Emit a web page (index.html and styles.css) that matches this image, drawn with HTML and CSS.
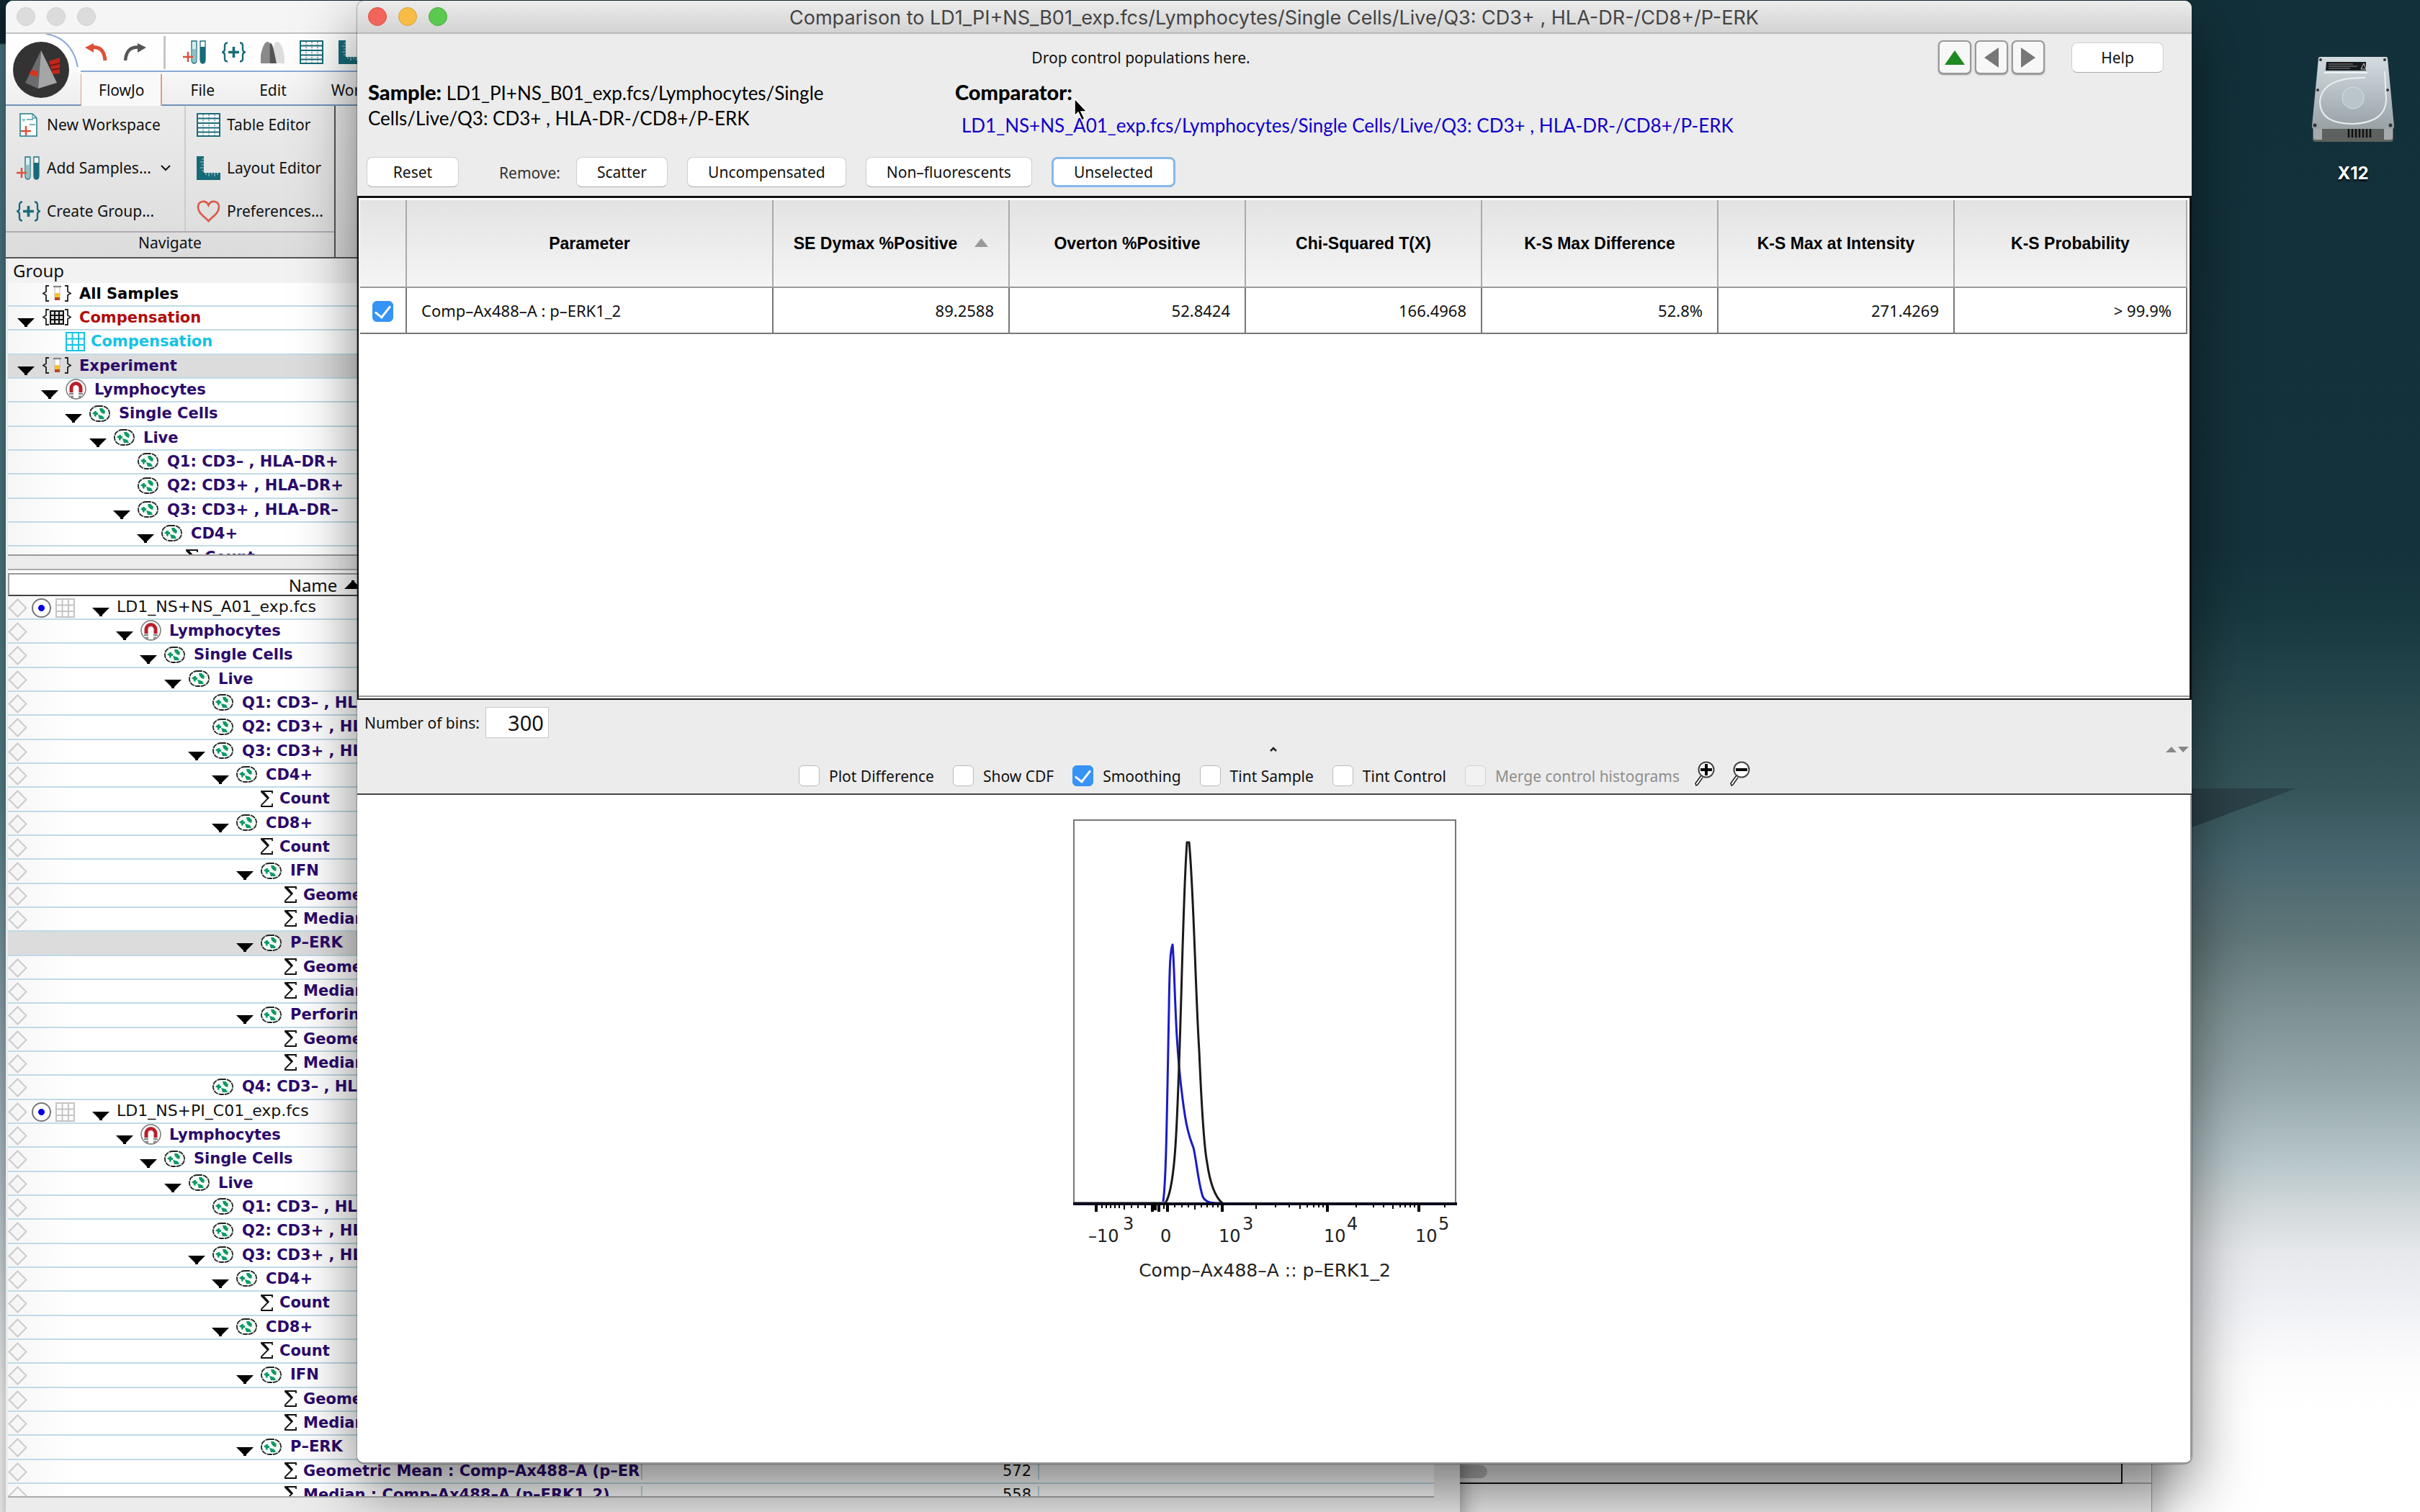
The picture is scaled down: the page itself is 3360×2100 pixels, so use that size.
FILE: index.html
```html
<!DOCTYPE html>
<html lang="en">
<head>
<meta charset="utf-8">
<title>Comparison</title>
<link rel="stylesheet" href="styles.css">
</head>
<body>
<svg class="defs" aria-hidden="true">
  <symbol id="tri" viewBox="0 0 24 12"><path d="M0 0h24L14 10v2h-4v-2z"/></symbol>
  <symbol id="cell" viewBox="0 0 29 23"><rect x="1" y="1" width="27" height="21" rx="11" ry="10" fill="#f4fbf8" stroke="#222" stroke-width="1.8" stroke-dasharray="7 1"/><path d="M4 11l4-3h2v2l2 0v3h-2l-1 3-2-1v-2zM14 4l4 0 4 4-1 4-3-1-3-3zM12 13l4 1 3 1 2 4-7 0z" fill="#0e9a63"/></symbol>
  <symbol id="magnet" viewBox="0 0 29 29"><circle cx="14.500" cy="14.500" r="13.500" fill="#fff" stroke="#777" stroke-width="1.500"/><path d="M8 19v-6a6.500 6.500 0 0 1 13 0v6" fill="none" stroke="#b8202c" stroke-width="5"/><path d="M5 21h6M18 21h6M7 25h4M18 25h4" stroke="#888" stroke-width="2.500"/></symbol>
  <symbol id="sigma" viewBox="0 0 17 23"><path d="M16 4V1H1v1l9 9-9 9v2h15v-4" fill="none" stroke="#111" stroke-width="1.800"/><path d="M3 2l8 9" stroke="#111" stroke-width="3"/></symbol>
  <symbol id="diamond" viewBox="0 0 27 27"><path d="M13.500 1.500l12 12-12 12-12-12z" fill="#f6f6f6" stroke="#ccc" stroke-width="2"/></symbol>
  <symbol id="grid3" viewBox="0 0 27 27"><path d="M1 1h25v25H1zM1 9.500h25M1 18h25M9.500 1v25M18 1v25" fill="none" stroke="currentColor" stroke-width="2"/></symbol>
  <symbol id="tubebrace" viewBox="0 0 42 23"><path d="M10 1H6v8l-4 2.500 4 2.500v8h4M32 1h4v8l4 2.500-4 2.500v8h-4" fill="none" stroke="#222" stroke-width="1.800"/><path d="M16 2h11" stroke="#777" stroke-width="2"/><path d="M18 3v17h7V3z" fill="#fff" stroke="#bbb"/><path d="M18 11h7v9h-7z" fill="#f5c02c"/><path d="M18 17h7v4h-7z" fill="#b8471c"/></symbol>
  <symbol id="gridbrace" viewBox="0 0 42 23"><path d="M10 1H6v8l-4 2.500 4 2.500v8h4M32 1h4v8l4 2.500-4 2.500v8h-4" fill="none" stroke="#222" stroke-width="1.800"/><path d="M12 3h18v18H12zM12 9h18M12 15h18M18 3v18M24 3v18" fill="#ddd" stroke="#111" stroke-width="2"/></symbol>
  <symbol id="tubes" viewBox="0 0 33 33"><path d="M12 1h7v26q0 5-3.500 5t-3.500-5z" fill="#d9eef0" stroke="#1b6b78" stroke-width="1.300"/><path d="M12.600 12h6v15q0 4-3 4t-3-4z" fill="#8fc0c6"/><path d="M24 1h7v26q0 5-3.500 5t-3.500-5z" fill="#fff" stroke="#1b6b78" stroke-width="1.300"/><path d="M24 9h7v18q0 5-3.500 5t-3.500-5z" fill="#176a78"/><path d="M0 23h14M7 16v14" stroke="#dc5137" stroke-width="2.500"/></symbol>
  <symbol id="braceplus" viewBox="0 0 33 28"><path d="M8 1Q4 1 4 5v5q0 3-3 4 3 1 3 4v5q0 4 4 4M25 1q4 0 4 4v5q0 3 3 4-3 1-3 4v5q0 4-4 4" fill="none" stroke="#1b6b78" stroke-width="2.400"/><path d="M9 14h15M16.500 6.500v15" stroke="#1b6b78" stroke-width="3.600"/></symbol>
  <symbol id="table" viewBox="0 0 33 33"><path d="M1 1h31v31H1z" fill="#fff" stroke="#1b6b78" stroke-width="2"/><path d="M1 7.500h31M1 14h31M1 20.500h31M1 26.500h31" stroke="#1b6b78" stroke-width="1.800"/><path d="M9 2v30M17 2v30M25 2v30" stroke="#1b6b78" stroke-dasharray="2 1.500"/></symbol>
  <symbol id="ruler" viewBox="0 0 33 33"><path d="M0 0h10v23h23v10H0z" fill="#176a78"/><path d="M7 4h3M5 8h5M7 12h3M5 16h5M7 20h3M13 23v3M17 23v5M21 23v3M25 23v5M29 23v3" stroke="#9cc6cc" stroke-width="1.200"/></symbol>
  <symbol id="heart" viewBox="0 0 33 33"><path d="M16.500 30C10 23 2 19 2 10.500 2 2 13 0 16.500 8 20 0 31 2 31 10.500 31 19 23 23 16.500 30z" fill="none" stroke="#dc5a4a" stroke-width="2.600"/></symbol>
  <symbol id="newdoc" viewBox="0 0 33 33"><path d="M5 1h17l6 6v25H5z" fill="#fff" stroke="#1b7a88" stroke-width="1.500"/><path d="M22 1v6h6M14 9h9M18 16h8" fill="none" stroke="#4a9aa5" stroke-width="1.300"/><path d="M7 8h6l-3 5z" fill="#8cc"/><path d="M6 25h14M13 18v13" stroke="#dc5137" stroke-width="2.500"/></symbol>
  <symbol id="undo" viewBox="0 0 32 26"><path d="M7 6Q26 2 28 24" fill="none" stroke="#dc5137" stroke-width="5"/><path d="M0 6L12 0v13z" fill="#dc5137"/></symbol>
  <symbol id="redo" viewBox="0 0 32 26"><path d="M25 6Q5 2 3 24" fill="none" stroke="#555" stroke-width="4.500"/><path d="M32 6L20 0v13z" fill="#555"/></symbol>
  <symbol id="peaks" viewBox="0 0 34 32"><path d="M14 32Q18 0 23 1q8 0 11 22v9z" fill="#ddd"/><path d="M0 32V20Q4 1 10 1t13 31z" fill="#8a8a8a"/><path d="M13 32V4q4-6 9 28z" fill="#555"/></symbol>
</svg>

<main class="desktop">
  <div class="wall-shadow"></div>

  <section class="win win-layout" aria-label="Layout window">
    <div class="scroll-area"><span class="thumb"></span></div>
    <div class="grip"></div>
  </section>

  <section class="win win-workspace" aria-label="Workspace">
    <header class="titlebar idle"><i></i><i></i><i></i></header>
    <div class="ribbon-head">
      <div class="logo">
        <svg viewBox="0 0 104 99" width="104" height="99"><path d="M56 0Q92 6 100 46" fill="none" stroke="#8aa9d6" stroke-width="2"/><circle cx="49" cy="50" r="39" fill="#333"/><path d="M60 38l15-5v22l-10 1z" fill="#c2261b"/><path d="M62 44l13-3M64 50l11-2" stroke="#5a1410" stroke-width="1.500"/><path d="M49 23L27 68l18 8z" fill="#6c6c6e"/><path d="M49 23l22 45-26 8z" fill="#a5a6a8"/><path d="M36 50l8 2v8l-12-4z" fill="#d8331f"/></svg>
      </div>
      <div class="quickbar">
        <svg class="q-arrow"><use href="#undo"/></svg>
        <svg class="q-arrow"><use href="#redo"/></svg>
        <span class="q-sep"></span>
        <svg class="ic"><use href="#tubes"/></svg>
        <svg class="ic"><use href="#braceplus"/></svg>
        <svg class="ic"><use href="#peaks"/></svg>
        <svg class="ic"><use href="#table"/></svg>
        <svg class="ic"><use href="#ruler"/></svg>
      </div>
      <nav class="tabs"><button class="on">FlowJo</button><button>File</button><button>Edit</button><button>Work</button></nav>
    </div>
    <div class="ribbon">
      <div class="ribbon-group">
        <div class="ribbon-col">
          <button><svg class="ic"><use href="#newdoc"/></svg>New Workspace</button>
          <button><svg class="ic"><use href="#tubes"/></svg>Add Samples...<svg class="chev" viewBox="0 0 14 9"><path d="M1 1l6 6 6-6" fill="none" stroke="#111" stroke-width="2"/></svg></button>
          <button><svg class="ic"><use href="#braceplus"/></svg>Create Group...</button>
        </div>
        <div class="ribbon-col second">
          <button><svg class="ic"><use href="#table"/></svg>Table Editor</button>
          <button><svg class="ic"><use href="#ruler"/></svg>Layout Editor</button>
          <button><svg class="ic"><use href="#heart"/></svg>Preferences...</button>
        </div>
        <div class="ribbon-label">Navigate</div>
      </div>
    </div>

    <div class="groups">
      <div class="groups-head">Group</div>
      <ul class="tree">
        <li class="d0 leaf black"><svg class="brace"><use href="#tubebrace"/></svg>All Samples</li>
        <li class="d0 red"><svg class="tri"><use href="#tri"/></svg><svg class="brace"><use href="#gridbrace"/></svg>Compensation</li>
        <li class="d1 leaf cyan"><svg class="g3"><use href="#grid3"/></svg>Compensation</li>
        <li class="d0 sel"><svg class="tri"><use href="#tri"/></svg><svg class="brace"><use href="#tubebrace"/></svg>Experiment</li>
        <li class="d1"><svg class="tri"><use href="#tri"/></svg><svg class="mag"><use href="#magnet"/></svg>Lymphocytes</li>
        <li class="d2"><svg class="tri"><use href="#tri"/></svg><svg class="cell"><use href="#cell"/></svg>Single Cells</li>
        <li class="d3"><svg class="tri"><use href="#tri"/></svg><svg class="cell"><use href="#cell"/></svg>Live</li>
        <li class="d4 leaf"><svg class="cell"><use href="#cell"/></svg>Q1: CD3– , HLA–DR+</li>
        <li class="d4 leaf"><svg class="cell"><use href="#cell"/></svg>Q2: CD3+ , HLA–DR+</li>
        <li class="d4"><svg class="tri"><use href="#tri"/></svg><svg class="cell"><use href="#cell"/></svg>Q3: CD3+ , HLA–DR–</li>
        <li class="d5"><svg class="tri"><use href="#tri"/></svg><svg class="cell"><use href="#cell"/></svg>CD4+</li>
        <li class="d6 leaf"><svg class="sig"><use href="#sigma"/></svg>Count</li>
      </ul>
    </div>

    <div class="samples">
      <div class="samples-head"><span>Name <svg class="up" viewBox="0 0 24 12"><path d="M0 12h24L14 2V0h-4v2z"/></svg></span></div>
      <div class="samples-body">
      <ul class="tree">
        <li class="d0 file"><span class="lead"><svg class="dia"><use href="#diamond"/></svg><input type="radio" name="a01" aria-label="LD1_NS+NS_A01" checked><svg class="g3"><use href="#grid3"/></svg></span><svg class="tri"><use href="#tri"/></svg>LD1_NS+NS_A01_exp.fcs</li>
        <li class="d1"><span class="lead"><svg class="dia"><use href="#diamond"/></svg></span><svg class="tri"><use href="#tri"/></svg><svg class="mag"><use href="#magnet"/></svg>Lymphocytes</li>
        <li class="d2"><span class="lead"><svg class="dia"><use href="#diamond"/></svg></span><svg class="tri"><use href="#tri"/></svg><svg class="cell"><use href="#cell"/></svg>Single Cells</li>
        <li class="d3"><span class="lead"><svg class="dia"><use href="#diamond"/></svg></span><svg class="tri"><use href="#tri"/></svg><svg class="cell"><use href="#cell"/></svg>Live</li>
        <li class="d4 leaf"><span class="lead"><svg class="dia"><use href="#diamond"/></svg></span><svg class="cell"><use href="#cell"/></svg>Q1: CD3– , HL</li>
        <li class="d4 leaf"><span class="lead"><svg class="dia"><use href="#diamond"/></svg></span><svg class="cell"><use href="#cell"/></svg>Q2: CD3+ , HL</li>
        <li class="d4"><span class="lead"><svg class="dia"><use href="#diamond"/></svg></span><svg class="tri"><use href="#tri"/></svg><svg class="cell"><use href="#cell"/></svg>Q3: CD3+ , HL</li>
        <li class="d5"><span class="lead"><svg class="dia"><use href="#diamond"/></svg></span><svg class="tri"><use href="#tri"/></svg><svg class="cell"><use href="#cell"/></svg>CD4+</li>
        <li class="d6 leaf"><span class="lead"><svg class="dia"><use href="#diamond"/></svg></span><svg class="sig"><use href="#sigma"/></svg>Count</li>
        <li class="d5"><span class="lead"><svg class="dia"><use href="#diamond"/></svg></span><svg class="tri"><use href="#tri"/></svg><svg class="cell"><use href="#cell"/></svg>CD8+</li>
        <li class="d6 leaf"><span class="lead"><svg class="dia"><use href="#diamond"/></svg></span><svg class="sig"><use href="#sigma"/></svg>Count</li>
        <li class="d6"><span class="lead"><svg class="dia"><use href="#diamond"/></svg></span><svg class="tri"><use href="#tri"/></svg><svg class="cell"><use href="#cell"/></svg>IFN</li>
        <li class="d7 leaf"><span class="lead"><svg class="dia"><use href="#diamond"/></svg></span><svg class="sig"><use href="#sigma"/></svg>Geomet</li>
        <li class="d7 leaf"><span class="lead"><svg class="dia"><use href="#diamond"/></svg></span><svg class="sig"><use href="#sigma"/></svg>Median</li>
        <li class="d6 sel"><span class="lead"></span><svg class="tri"><use href="#tri"/></svg><svg class="cell"><use href="#cell"/></svg>P–ERK</li>
        <li class="d7 leaf"><span class="lead"><svg class="dia"><use href="#diamond"/></svg></span><svg class="sig"><use href="#sigma"/></svg>Geomet</li>
        <li class="d7 leaf"><span class="lead"><svg class="dia"><use href="#diamond"/></svg></span><svg class="sig"><use href="#sigma"/></svg>Median</li>
        <li class="d6"><span class="lead"><svg class="dia"><use href="#diamond"/></svg></span><svg class="tri"><use href="#tri"/></svg><svg class="cell"><use href="#cell"/></svg>Perforin</li>
        <li class="d7 leaf"><span class="lead"><svg class="dia"><use href="#diamond"/></svg></span><svg class="sig"><use href="#sigma"/></svg>Geomet</li>
        <li class="d7 leaf"><span class="lead"><svg class="dia"><use href="#diamond"/></svg></span><svg class="sig"><use href="#sigma"/></svg>Median</li>
        <li class="d4 leaf"><span class="lead"><svg class="dia"><use href="#diamond"/></svg></span><svg class="cell"><use href="#cell"/></svg>Q4: CD3– , HL</li>
        <li class="d0 file"><span class="lead"><svg class="dia"><use href="#diamond"/></svg><input type="radio" name="c01" aria-label="LD1_NS+PI_C01" checked><svg class="g3"><use href="#grid3"/></svg></span><svg class="tri"><use href="#tri"/></svg>LD1_NS+PI_C01_exp.fcs</li>
        <li class="d1"><span class="lead"><svg class="dia"><use href="#diamond"/></svg></span><svg class="tri"><use href="#tri"/></svg><svg class="mag"><use href="#magnet"/></svg>Lymphocytes</li>
        <li class="d2"><span class="lead"><svg class="dia"><use href="#diamond"/></svg></span><svg class="tri"><use href="#tri"/></svg><svg class="cell"><use href="#cell"/></svg>Single Cells</li>
        <li class="d3"><span class="lead"><svg class="dia"><use href="#diamond"/></svg></span><svg class="tri"><use href="#tri"/></svg><svg class="cell"><use href="#cell"/></svg>Live</li>
        <li class="d4 leaf"><span class="lead"><svg class="dia"><use href="#diamond"/></svg></span><svg class="cell"><use href="#cell"/></svg>Q1: CD3– , HL</li>
        <li class="d4 leaf"><span class="lead"><svg class="dia"><use href="#diamond"/></svg></span><svg class="cell"><use href="#cell"/></svg>Q2: CD3+ , HL</li>
        <li class="d4"><span class="lead"><svg class="dia"><use href="#diamond"/></svg></span><svg class="tri"><use href="#tri"/></svg><svg class="cell"><use href="#cell"/></svg>Q3: CD3+ , HL</li>
        <li class="d5"><span class="lead"><svg class="dia"><use href="#diamond"/></svg></span><svg class="tri"><use href="#tri"/></svg><svg class="cell"><use href="#cell"/></svg>CD4+</li>
        <li class="d6 leaf"><span class="lead"><svg class="dia"><use href="#diamond"/></svg></span><svg class="sig"><use href="#sigma"/></svg>Count</li>
        <li class="d5"><span class="lead"><svg class="dia"><use href="#diamond"/></svg></span><svg class="tri"><use href="#tri"/></svg><svg class="cell"><use href="#cell"/></svg>CD8+</li>
        <li class="d6 leaf"><span class="lead"><svg class="dia"><use href="#diamond"/></svg></span><svg class="sig"><use href="#sigma"/></svg>Count</li>
        <li class="d6"><span class="lead"><svg class="dia"><use href="#diamond"/></svg></span><svg class="tri"><use href="#tri"/></svg><svg class="cell"><use href="#cell"/></svg>IFN</li>
        <li class="d7 leaf"><span class="lead"><svg class="dia"><use href="#diamond"/></svg></span><svg class="sig"><use href="#sigma"/></svg>Geomet</li>
        <li class="d7 leaf"><span class="lead"><svg class="dia"><use href="#diamond"/></svg></span><svg class="sig"><use href="#sigma"/></svg>Median</li>
        <li class="d6"><span class="lead"><svg class="dia"><use href="#diamond"/></svg></span><svg class="tri"><use href="#tri"/></svg><svg class="cell"><use href="#cell"/></svg>P–ERK</li>
        <li class="d7 leaf"><span class="lead"><svg class="dia"><use href="#diamond"/></svg></span><svg class="sig"><use href="#sigma"/></svg><span class="stat">Geometric Mean : Comp–Ax488–A (p–ERK1_2)</span><span class="val">572</span><span class="rest"></span></li>
        <li class="d7 leaf"><span class="lead"><svg class="dia"><use href="#diamond"/></svg></span><svg class="sig"><use href="#sigma"/></svg><span class="stat">Median : Comp–Ax488–A (p–ERK1_2)</span><span class="val">558</span><span class="rest"></span></li>
      </ul>
      </div>
    </div>
  </section>

  <section class="win win-compare" aria-label="Comparison">
    <header class="titlebar active"><i class="r"></i><i class="y"></i><i class="g"></i>
      <h1>Comparison to LD1_PI+NS_B01_exp.fcs/Lymphocytes/Single Cells/Live/Q3: CD3+ , HLA-DR-/CD8+/P-ERK</h1></header>
    <div class="head">
      <div class="head-top">
        <p>Drop control populations here.</p>
        <div class="arrows">
          <button aria-label="Up"><svg viewBox="0 0 30 22" width="30" height="22"><path d="M15 1l14 20H1z" fill="#1f8a1f"/></svg></button>
          <button aria-label="Previous"><svg viewBox="0 0 20 28" width="20" height="28"><path d="M20 0v28L0 14z" fill="#777"/></svg></button>
          <button aria-label="Next"><svg viewBox="0 0 20 28" width="20" height="28"><path d="M0 0v28l20-14z" fill="#777"/></svg></button>
        </div>
        <button class="btn help">Help</button>
      </div>
      <div class="paths">
        <p class="sample"><strong>Sample:</strong> LD1_PI+NS_B01_exp.fcs/Lymphocytes/Single Cells/Live/Q3: CD3+ , HLA-DR-/CD8+/P-ERK</p>
        <div><strong>Comparator:</strong>
          <a href="#">LD1_NS+NS_A01_exp.fcs/Lymphocytes/Single Cells/Live/Q3: CD3+ , HLA-DR-/CD8+/P-ERK</a></div>
      </div>
      <div class="actions">
        <button class="btn reset">Reset</button><span>Remove:</span>
        <button class="btn">Scatter</button><button class="btn">Uncompensated</button><button class="btn">Non–fluorescents</button><button class="btn focus">Unselected</button>
      </div>
    </div>
    <div class="panel">
      <table>
        <colgroup><col class="c-check"><col class="c-param"><col class="c-num"><col class="c-num"><col class="c-num"><col class="c-num"><col class="c-num"><col></colgroup>
        <thead><tr><th></th><th>Parameter</th><th>SE Dymax %Positive<svg class="sort" viewBox="0 0 19 12"><path d="M9.500 0L19 12H0z" fill="#999"/></svg></th><th>Overton %Positive</th><th>Chi-Squared T(X)</th><th>K-S Max Difference</th><th>K-S Max at Intensity</th><th>K-S Probability</th></tr></thead>
        <tbody><tr><td><input type="checkbox" aria-label="Comp-Ax488-A" checked></td><td>Comp–Ax488–A : p–ERK1_2</td><td>89.2588</td><td>52.8424</td><td>166.4968</td><td>52.8%</td><td>271.4269</td><td>&gt; 99.9%</td></tr></tbody>
      </table>
    </div>
    <div class="options">
      <div class="bins"><label for="bins">Number of bins:</label><input id="bins" type="text" value="300"></div>
      <div class="split"><svg viewBox="0 0 10 8" width="10" height="8"><path d="M1 6l4-4 4 4" fill="none" stroke="#222" stroke-width="2.500"/></svg><svg class="pair" viewBox="0 0 32 8" width="32" height="8"><path d="M0 8h15L8 0zM17 0h15l-8 8z" fill="#888"/></svg></div>
      <div class="checks">
        <label><input type="checkbox">Plot Difference</label>
        <label><input type="checkbox">Show CDF</label>
        <label><input type="checkbox" checked>Smoothing</label>
        <label><input type="checkbox">Tint Sample</label>
        <label><input type="checkbox">Tint Control</label>
        <label class="off"><input type="checkbox" disabled>Merge control histograms</label>
        <button aria-label="Zoom in"><svg viewBox="0 0 29 35" width="29" height="35"><path d="M10 20L2 31l1 3 2-1 7-10" fill="#fff" stroke="#222" stroke-width="1.500"/><circle cx="17" cy="12" r="10.500" fill="#fff" stroke="#444" stroke-width="2"/><path d="M9 12h16M17 4v16" stroke="#000" stroke-width="4"/></svg></button>
        <button aria-label="Zoom out"><svg viewBox="0 0 29 35" width="29" height="35"><path d="M10 20L2 31l1 3 2-1 7-10" fill="#fff" stroke="#222" stroke-width="1.500"/><circle cx="17" cy="12" r="10.500" fill="#fff" stroke="#444" stroke-width="2"/><path d="M9 12h16" stroke="#000" stroke-width="4"/></svg></button>
      </div>
    </div>
    <div class="plot">
      <svg viewBox="1460 1110 618 700" width="618" height="700" role="img" aria-label="Histogram overlay">
        <rect x="1491" y="1139" width="530" height="532" fill="none" stroke="#777" stroke-width="2"/>
        <g fill="none" stroke-width="3" stroke-linejoin="round">
          <path stroke="#1a1ac8" d="M1615 1669C1619 1640 1620 1560 1623 1400C1624 1335 1625 1320 1628 1312C1630 1330 1631 1390 1634 1440C1637 1490 1640 1515 1645 1548C1649 1575 1653 1583 1657 1594C1661 1610 1664 1645 1670 1662C1675 1672 1685 1671 1697 1671"/>
          <path stroke="#1a1a1a" d="M1491 1671H1618C1632 1650 1634 1560 1637 1480C1641 1370 1643 1240 1648 1170H1651C1657 1230 1660 1380 1665 1460C1668 1530 1671 1590 1676 1615C1681 1650 1689 1664 1697 1671"/>
        </g>
        <path d="M1490 1672h533" stroke="#0a0a20" stroke-width="4"/>
        <path d="M1522 1671v12M1600 1671v12M1604 1671v10M1609 1671v12M1621 1671v12M1697 1671v12M1843 1671v12M1970 1671v12" stroke="#000" stroke-width="4"/>
        <path d="M1530 1671v7M1536 1671v7M1542 1671v7M1548 1671v7M1554 1671v7M1561 1671v9M1571 1671v7M1580 1671v7M1590 1671v7M1616 1671v8M1631 1671v6M1641 1671v6M1650 1671v6M1659 1671v9M1668 1671v6M1676 1671v6M1684 1671v6M1691 1671v6M1744 1671v8M1771 1671v6M1790 1671v6M1805 1671v8M1815 1671v6M1824 1671v6M1831 1671v6M1837 1671v6M1883 1671v6M1907 1671v6M1921 1671v6M1934 1671v8M1944 1671v6M1951 1671v6M1958 1671v6M1964 1671v6M2006 1671v6" stroke="#000" stroke-width="2"/>
        <g class="axis">
          <text x="1511" y="1725">–10</text><text x="1559" y="1708">3</text>
          <text x="1611" y="1725">0</text>
          <text x="1692" y="1725">10</text><text x="1725" y="1708">3</text>
          <text x="1838" y="1725">10</text><text x="1870" y="1708">4</text>
          <text x="1965" y="1725">10</text><text x="1997" y="1708">5</text>
          <text class="name" x="1756" y="1773" text-anchor="middle">Comp–Ax488–A :: p–ERK1_2</text>
        </g>
      </svg>
    </div>
    <svg class="cursor" viewBox="0 0 22 34" width="22" height="34"><path d="M2 2v24l5-5 5 11 4-2-5-10h8z" fill="#000" stroke="#fff" stroke-width="1.500"/></svg>
  </section>

  <figure class="drive">
    <svg viewBox="0 0 116 120" width="116" height="120">
      <defs><linearGradient id="dg" x1="0" y1="0" x2="0" y2="1"><stop offset="0" stop-color="#d3dce0"/><stop offset="1" stop-color="#98a2a6"/></linearGradient></defs>
      <path d="M2 98h112v16q0 4-4 4H6q-4 0-4-4z" fill="#5d615f"/><path d="M3 99h12v16H6q-3 0-3-3zM101 99h12v13q0 3-3 3h-9z" fill="#a6aaaa"/>
      <path d="M52 100v12M57 100v12M62 100v12M67 100v12M72 100v12M77 100v12M82 100v12" stroke="#111" stroke-width="2.500"/>
      <path d="M10 2q0-2 3-2h90q3 0 3 2l9 94q0 4-3 4H4q-3 0-3-4z" fill="url(#dg)"/>
      <path d="M75 29Q15 28 12 62q0 31 46 31 45-2 46-33L102 20" fill="none" stroke="#e9eff1" stroke-width="2"/>
      <circle cx="58" cy="57" r="15" fill="#b9c5ca" stroke="#d8e0e3"/>
      <path d="M21 7h55v12H20z" fill="#17191c"/><path d="M24 10h34M24 13h40M24 16h30" stroke="#888" stroke-width="1"/><path d="M69 17l4-8 3 8z" fill="none" stroke="#ccc"/><path d="M18 22h60" stroke="#eef3f5" stroke-width="2"/>
      <g fill="#333"><circle cx="13" cy="4" r="2"/><circle cx="102" cy="4" r="2"/><circle cx="9" cy="46" r="2"/><circle cx="106" cy="46" r="2"/><circle cx="5" cy="95" r="2.500"/><circle cx="110" cy="95" r="2.500"/></g>
    </svg>
    <figcaption>X12</figcaption>
  </figure>
</main>
</body>
</html>
```
FILE: styles.css
```css
* { box-sizing: border-box; }
body { margin: 0; font-family: "Noto Sans", "Open Sans", sans-serif; font-size: 21px; color: #111; }
button { font: inherit; color: inherit; background: none; border: 0; padding: 0; }
svg { flex: none; display: block; }
p, h1, ul, figure { margin: 0; padding: 0; }
.defs { position: absolute; width: 0; height: 0; }

.desktop {
  position: relative; height: 100vh; overflow: hidden;
  background: linear-gradient(#12303a 0, #14323b 765px, #183840 850px, #2a4a50 1000px, #345459 1095px, #496770 1200px, #5f7678 1300px, #7c9091 1400px, #94a5a8 1500px, #b2c2c7 1600px, #d2d9da 1680px, #e6e8ec 1740px, #eeeff4 1800px, #fcfcfd 1900px, #fff 1960px);
}
.desktop::before { content: ""; position: absolute; left: 0; top: 0; bottom: 0; width: 12px; background: linear-gradient(#0d2730 0, #0d2730 60px, #4a7680 62px, #4a7680 700px, #54808a 1100px, #8ba4b0 1400px, #c4d0d6 1700px, #fff 1950px); }
.wall-shadow { position: absolute; left: 3043px; top: 1095px; width: 145px; height: 54px; background: #2b4248; clip-path: polygon(0 0, 100% 0, 0 100%); }

.win { position: absolute; }
.titlebar { display: flex; align-items: center; gap: 16px; height: 46px; flex: none; border-bottom: 2px solid #c2c2c2; }
.titlebar i { width: 26px; height: 26px; border-radius: 50%; background: #dcdcdc; border: 1px solid #cfcfcf; }

/* window mostly hidden behind the others */
.win-layout { left: 1900px; right: 372px; top: 1200px; bottom: -40px; background: #ececec; border-right: 1px solid #999; box-shadow: 0 20px 50px rgba(0,0,0,.3); display: grid; grid-template-columns: 1fr 40px; grid-template-rows: 861px 1fr; }
.scroll-area { border: solid #111; border-width: 0 2px 2px 0; background: #e4e4e4; display: flex; align-items: flex-end; padding: 0 0 6px 107px; }
.thumb { width: 58px; height: 18px; border-radius: 9px; background: #b4b4b4; }
.grip { border-bottom: 2px solid #aaa; }

/* workspace window */
.win-workspace { left: 8px; width: calc(60% + 3px); top: 1px; bottom: -20px; background: #ececec; border-radius: 10px 10px 0 0; box-shadow: 0 4px 30px rgba(0,0,0,.45); display: flex; flex-direction: column; overflow: hidden; }
.idle { background: #f5f5f5; padding-left: 15px; }
.ribbon-head { display: grid; grid-template-columns: 104px 1fr; grid-template-rows: 53px 47px; height: 100px; flex: none; background: linear-gradient(#fff, #fdfdfd 53px, #f7f7f7 54px, #eee); border-bottom: 2px solid #6f93b8; }
.logo { grid-row: 1 / 3; }
.quickbar { display: flex; align-items: center; gap: 21px; padding-left: 6px; border-bottom: 2px solid #8aa9d6; }
.q-arrow { width: 32px; height: 26px; }
.q-sep { width: 3px; height: 46px; margin: 0 3px; background: #c6c6c6; }
.ic { width: 33px; height: 33px; }
.tabs { display: flex; padding-top: 3px; }
.tabs button { padding: 0 31px; }
.tabs .on { padding: 0 22px 0 24px; margin-right: 9px; border: solid #d9a184; border-width: 0 2px 0 1px; background: #f9f9f9; }
.ribbon { height: 212px; flex: none; display: flex; border-bottom: 2px solid #555; background: linear-gradient(#ebebeb, #dcdcdc); }
.ribbon-group { display: grid; grid-template-columns: 250px 206px; grid-template-rows: 174px 36px; border-right: 2px solid #555; }
.ribbon-col { padding-left: 15px; display: flex; flex-direction: column; gap: 8px; border-right: 2px solid #ccc; }
.ribbon-col.second { border: 0; }
.ribbon-col button { display: flex; flex: none; align-items: center; gap: 9px; height: 52px; white-space: nowrap; }
.chev { width: 14px; height: 9px; margin-left: 4px; }
.ribbon-label { grid-column: 1 / 3; border-top: 2px solid #b3a9b5; text-align: center; line-height: 28px; }

.groups { height: 413px; flex: none; margin-left: 3px; background: #fff; overflow: hidden; border-bottom: 2px solid #999; }
.groups-head { height: 34px; line-height: 33px; padding-left: 7px; font-size: 24px; background: #f2f2f2; }
.tree { list-style: none; font: bold 21px "DejaVu Sans", sans-serif; color: #2b0a6b; background: linear-gradient(90deg, #f6f6f6, #fff 90px); }
.tree li { display: flex; align-items: center; height: 33px; padding-bottom: 2px; border-bottom: 2px solid #bfdbe6; white-space: nowrap; }
.tree li:nth-child(3n) { height: 34px; }
.tree .sel { background: #dcdcdc; }
.tree .black { color: #000; }
.tree .red { color: #b00d0d; }
.tree .cyan { color: #16c3e6; }
.tree .file { font-weight: 400; font-size: 22px; color: #111; }
.tri { width: 24px; height: 12px; margin: 14px 10px 0 0; fill: #000; }
.brace { width: 42px; height: 23px; margin-right: 10px; }
.cell { width: 29px; height: 23px; margin-right: 12px; }
.mag { width: 29px; height: 29px; margin-right: 11px; }
.sig { width: 17px; height: 23px; margin-right: 9px; }
.g3 { width: 27px; height: 27px; margin-right: 8px; }
.groups li { padding-left: 13px; }
.groups .d1 { padding-left: 46px; }
.groups .d2 { padding-left: 79px; }
.groups .d3 { padding-left: 113px; }
.groups .d4 { padding-left: 146px; }
.groups .d5 { padding-left: 179px; }
.groups .d6 { padding-left: 213px; }
.tree .leaf > :is(.brace, .cell, .sig), .groups .leaf .g3 { margin-left: 34px; }

.samples { flex: none; height: 1290px; margin: 18px 36px 0 3px; border: solid #aaa; border-width: 2px 0; background: #fff; padding-top: 4px; display: flex; flex-direction: column; }
.samples-head { height: 32px; flex: none; width: 881px; border: 2px solid #999; border-bottom-color: #444; display: flex; align-items: center; justify-content: center; font-size: 24px; }
.samples-head span { display: flex; align-items: center; gap: 10px; }
.up { width: 24px; height: 12px; }
.samples-body { overflow: hidden; }
.lead { width: 117px; flex: none; display: flex; align-items: center; gap: 6px; padding-top: 3px; }
.lead .g3 { color: #c4c4c4; margin: 0; }
.dia { width: 27px; height: 27px; }
.lead input { appearance: none; margin: 0; width: 27px; height: 27px; border: 2px solid #777; border-radius: 50%; background: radial-gradient(circle, #0000e0 4px, #fff 5px); }
.samples .d1 .lead { width: 150px; }
.samples .d2 .lead { width: 183px; }
.samples .d3 .lead { width: 217px; }
.samples .d4 .lead { width: 250px; }
.samples .d5 .lead { width: 283px; }
.samples .d6 .lead { width: 317px; }
.samples .d7 .lead { width: 350px; }
.stat { flex: 0 0 471px; overflow: hidden; border-right: 2px solid #bfdbe6; }
.val { flex: 0 0 551px; text-align: right; padding-right: 9px; border-right: 2px solid #bfdbe6; font-weight: 400; color: #111; }
.rest { flex: 1; }

/* comparison window */
.win-compare { left: 496px; right: 317px; top: 1px; bottom: 67px; background: #ececec; border-radius: 10px; display: flex; flex-direction: column; overflow: hidden; border-bottom: 2px solid #999; box-shadow: 0 36px 84px rgba(0,0,0,.5), 0 0 2px #222; }
.active { background: linear-gradient(#ececec, #d3d3d3); border-color: #b8b8b8; padding: 0 142px 0 15px; }
.active .r { background: #f2655a; border-color: #dd4c42; }
.active .y { background: #f7bd45; border-color: #dea033; }
.active .g { background: #5bc94f; border-color: #43ad38; }
.titlebar h1 { flex: 1; padding-top: 3px; text-align: center; font: 400 27px Inter, "Liberation Sans", sans-serif; color: #444; white-space: nowrap; }
.head { height: 225px; flex: none; }
.head-top { display: flex; align-items: center; height: 65px; padding-right: 39px; }
.head-top p { flex: 1; text-align: center; padding-right: 19px; }
.arrows { display: flex; gap: 5px; margin-right: 37px; }
.arrows button { width: 46px; height: 47px; display: grid; place-items: center; border: 2px solid #999; border-radius: 7px; background: #f7f7f7; box-shadow: 0 1px 2px #888; }
.btn { height: 42px; padding: 0 28px; border: 1px solid #cfcfcf; border-bottom-color: #aaa; border-radius: 8px; background: #fff; color: #111; }
.help { width: 128px; }
.paths { display: grid; grid-template-columns: 815px 1fr; padding-left: 15px; height: 106px; font: 26px/35px Lato, "Open Sans", sans-serif; color: #000; }
.paths strong { font-weight: 900; font-size: 29px; line-height: 1; }
.sample { max-width: 690px; }
.paths a { display: block; margin-top: 10px; padding-left: 9px; color: #1100c8; text-decoration: none; white-space: nowrap; }
.actions { display: flex; align-items: center; gap: 27px; padding-left: 13px; }
.actions span { margin: 2px -5px 0 29px; color: #333; }
.actions .focus { border: 3px solid #86b8ea; }
.reset { width: 128px; }
.panel { height: 700px; flex: none; background: #fff; border: solid #111; border-width: 3px 3px 2px 2px; padding: 3px 3px 0 2px; box-shadow: inset 0 -2px #fff, inset 0 -4px #999; }
table { width: 100%; table-layout: fixed; border-collapse: separate; border-spacing: 0; font-size: 22px; }
.c-check { width: 65px; }
.c-param { width: 509px; }
.c-num { width: 328px; }
th { height: 122px; font: bold 23px "Liberation Sans", sans-serif; color: #000; padding: 0; border-right: 2px solid #aaa; border-bottom: 2px solid #999; background: linear-gradient(#e3e3e3, #f5f5f5); white-space: nowrap; }
td { height: 64px; padding: 0 20px; border-right: 2px solid #777; border-bottom: 2px solid #777; text-align: right; }
td:nth-child(2) { text-align: left; }
td:first-child { padding: 0; text-align: center; }
.sort { display: inline-block; width: 19px; height: 12px; margin: 0 0 3px 24px; }
input[type="checkbox"] { appearance: none; width: 29px; height: 29px; margin: 0; flex: none; border: 1px solid #bbb; border-radius: 6px; background: #fff; display: inline-grid; place-items: center; vertical-align: middle; }
input[type="checkbox"]:checked { background: #3793f5; border-color: #3793f5; }
input[type="checkbox"]:checked::after { content: ""; width: 10px; height: 18px; margin-bottom: 5px; border: solid #fff; border-width: 0 3px 3px 0; transform: rotate(38deg); }
input[type="checkbox"]:disabled { background: #f2f2f2; border-color: #d2d2d2; }
.options { height: 132px; flex: none; border-bottom: 2px solid #444; }
.bins { display: flex; align-items: center; gap: 8px; padding: 10px 0 0 10px; }
.bins input { width: 88px; height: 43px; border: 1px solid #c8c8c8; font: 29px "Noto Sans", sans-serif; text-align: right; padding: 0 6px 0 0; color: #111; }
.split { display: grid; grid-template-columns: 1fr auto 1fr; padding: 12px 4px 0 0; height: 24px; }
.split svg:first-child { grid-column: 2; }
.split .pair { justify-self: end; }
.checks { display: flex; align-items: center; justify-content: center; gap: 26px; height: 53px; padding-top: 4px; }
.checks label { display: flex; align-items: center; gap: 13px; }
.checks button { margin: -6px 0 0 -6px; }
.off { color: #8e8e8e; }
.plot { flex: 1; background: #fff; display: flex; justify-content: center; align-items: flex-start; padding-top: 6px; border-right: 2px solid #999; }
.axis { font: 24px "DejaVu Sans", sans-serif; fill: #222; }
.name { font-size: 25px; }
.cursor { position: absolute; left: 994px; top: 134px; }

.drive { position: absolute; right: 35px; top: 79px; display: flex; flex-direction: column; align-items: center; gap: 27px; }
.drive figcaption { color: #fff; font: bold 24px/30px Inter, sans-serif; text-shadow: 0 2px 3px #000; }
```
